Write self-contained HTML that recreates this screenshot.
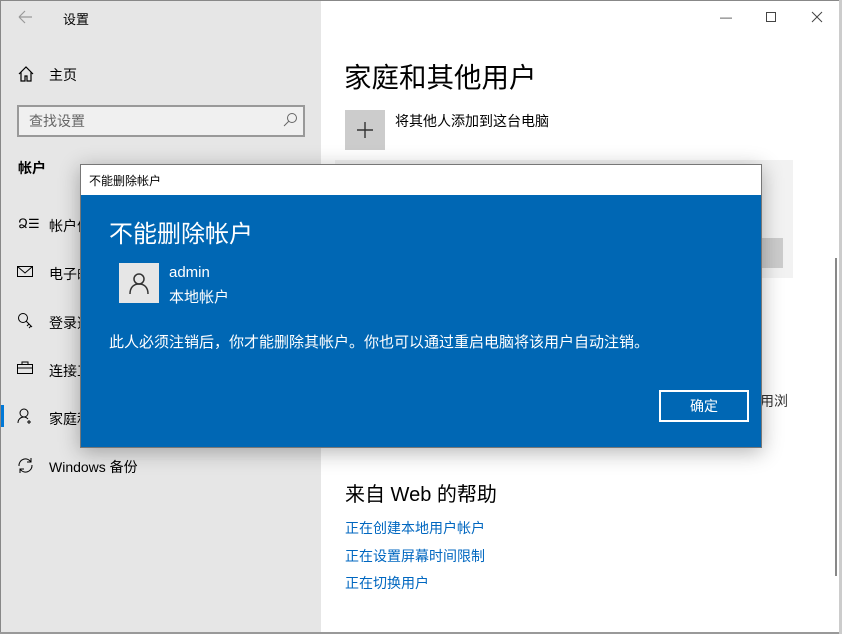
<!DOCTYPE html>
<html><head><meta charset="utf-8"><style>
*{margin:0;padding:0;box-sizing:border-box}
body{width:842px;height:634px;overflow:hidden;background:#fff;font-family:"Liberation Sans","Noto Sans CJK SC",sans-serif;position:relative}
.a{position:absolute;white-space:nowrap}
#left{position:absolute;left:0;top:0;width:321px;height:634px;background:#e6e6e6;border-left:1px solid #888;border-top:1px solid #888}
.nav{font-size:14px;color:#000}
.lnk{color:#0067c0;font-size:14px}
</style></head><body>
<div id="left"></div>
<div class="a" style="left:0;top:0;width:842px;height:1px;background:#888"></div>
<div class="a" style="left:0;top:632px;width:842px;height:2px;background:#999"></div>
<div class="a" style="left:839px;top:0;width:3px;height:634px;background:#ccc"></div>
<div class="a" style="left:835px;top:258px;width:2px;height:318px;background:#888"></div>
<svg class="a" style="left:17px;top:9px" width="16" height="16"><path d="M2 8H15M2 8L8 2M2 8L8 14" stroke="#999" fill="none" stroke-width="1.2"/></svg>
<div class="a nav" style="left:63px;top:9px;font-size:13px">设置</div>
<svg class="a" style="left:18px;top:66px" width="16" height="16"><path d="M1 8L8 1L15 8M3 6V15H7V10H9V15H13V6" stroke="#000" fill="none" stroke-width="1.2"/></svg>
<div class="a nav" style="left:49px;top:65px">主页</div>
<div class="a" style="left:17px;top:105px;width:288px;height:32px;border:2px solid #999;background:#f0f0f0"></div>
<div class="a" style="left:29px;top:111px;font-size:14px;color:#666">查找设置</div>
<svg class="a" style="left:282px;top:112px" width="16" height="16"><circle cx="10" cy="6" r="4.5" stroke="#666" fill="none"/><path d="M7 9L2 14" stroke="#666"/></svg>
<div class="a nav" style="left:18px;top:158px;font-weight:bold">帐户</div>
<div class="a nav" style="left:18px;top:216px;font-size:13px">Ձ☰</div>
<div class="a nav" style="left:49px;top:216px">帐户信息</div>
<svg class="a" style="left:17px;top:266px" width="17" height="12"><rect x="0.5" y="0.5" width="15" height="10" stroke="#000" fill="none"/><path d="M0.5 0.5L8 7L15.5 0.5" stroke="#000" fill="none"/></svg>
<div class="a nav" style="left:49px;top:264px">电子邮件</div>
<svg class="a" style="left:17px;top:312px" width="17" height="17"><circle cx="6" cy="6" r="4.5" stroke="#000" fill="none"/><path d="M9 9L15 15M12 12L10 14M14 14L12 16" stroke="#000" fill="none"/></svg>
<div class="a nav" style="left:49px;top:313px">登录选项</div>
<svg class="a" style="left:17px;top:361px" width="17" height="14"><rect x="0.5" y="3.5" width="15" height="9" stroke="#000" fill="none"/><path d="M5 3.5V1H11V3.5M0.5 7H15.5" stroke="#000" fill="none"/></svg>
<div class="a nav" style="left:49px;top:361px">连接工作</div>
<div class="a" style="left:1px;top:405px;width:3px;height:22px;background:#0078d7"></div>
<svg class="a" style="left:17px;top:408px" width="17" height="17"><circle cx="7" cy="5" r="4" stroke="#000" fill="none"/><path d="M1 15C1 11 4 9 7 9C9 9 10 10 11 11M12 12V16M10 14H14" stroke="#000" fill="none"/></svg>
<div class="a nav" style="left:49px;top:409px">家庭和其他用户</div>
<svg class="a" style="left:17px;top:457px" width="17" height="17"><path d="M2 9A6.5 6.5 0 0 1 14 5M15 8A6.5 6.5 0 0 1 3 12M14 1V5H10M3 16V12H7" stroke="#000" fill="none"/></svg>
<div class="a nav" style="left:49px;top:457px">Windows 备份</div>
<!-- right -->
<div class="a" style="left:720px;top:10px;font-size:12px;color:#444">—</div>
<div class="a" style="left:766px;top:12px;width:10px;height:10px;border:1px solid #444"></div>
<svg class="a" style="left:811px;top:11px" width="12" height="12"><path d="M1 1L11 11M11 1L1 11" stroke="#444"/></svg>
<div class="a" style="left:344px;top:55px;font-size:27.5px;color:#000">家庭和其他用户</div>
<div class="a" style="left:345px;top:110px;width:40px;height:40px;background:#ccc"></div>
<svg class="a" style="left:355px;top:120px" width="20" height="20"><path d="M10 2V18M2 10H18" stroke="#333" stroke-width="1.4"/></svg>
<div class="a" style="left:395px;top:111px;font-size:14px">将其他人添加到这台电脑</div>
<div class="a" style="left:335px;top:160px;width:458px;height:118px;background:#f2f2f2"></div>
<div class="a" style="left:755px;top:238px;width:28px;height:30px;background:#ccc"></div>
<div class="a" style="left:760px;top:391px;font-size:14px;color:#333">用浏</div>
<div class="a" style="left:345px;top:478px;font-size:20px;color:#000">来自 Web 的帮助</div>
<div class="a lnk" style="left:345px;top:518px">正在创建本地用户帐户</div>
<div class="a lnk" style="left:345px;top:546px">正在设置屏幕时间限制</div>
<div class="a lnk" style="left:345px;top:573px">正在切换用户</div>
<!-- dialog -->
<div class="a" style="left:80px;top:164px;width:682px;height:284px;border:1px solid #777;background:#0067b4;box-shadow:0 4px 20px rgba(0,0,0,.3)"></div>
<div class="a" style="left:81px;top:165px;width:680px;height:30px;background:#fff"></div>
<div class="a" style="left:89px;top:172px;font-size:12px;color:#000">不能删除帐户</div>
<div class="a" style="left:109px;top:214px;font-size:24px;color:#fff">不能删除帐户</div>
<div class="a" style="left:119px;top:263px;width:40px;height:40px;background:#e6e6e6"></div>
<svg class="a" style="left:127px;top:271px" width="24" height="24"><circle cx="12" cy="8" r="5" stroke="#333" stroke-width="1.5" fill="none"/><path d="M3 23C3 16 7 13 12 13C17 13 21 16 21 23" stroke="#333" stroke-width="1.5" fill="none"/></svg>
<div class="a" style="left:169px;top:264px;font-size:15px;color:#fff">admin</div>
<div class="a" style="left:169px;top:286px;font-size:15px;color:#fff">本地帐户</div>
<div class="a" style="left:109px;top:331px;font-size:15px;color:#fff">此人必须注销后，你才能删除其帐户。你也可以通过重启电脑将该用户自动注销。</div>
<div class="a" style="left:659px;top:390px;width:90px;height:32px;border:2px solid #fff;color:#fff;font-size:14px;text-align:center;line-height:28px">确定</div>
</body></html>
